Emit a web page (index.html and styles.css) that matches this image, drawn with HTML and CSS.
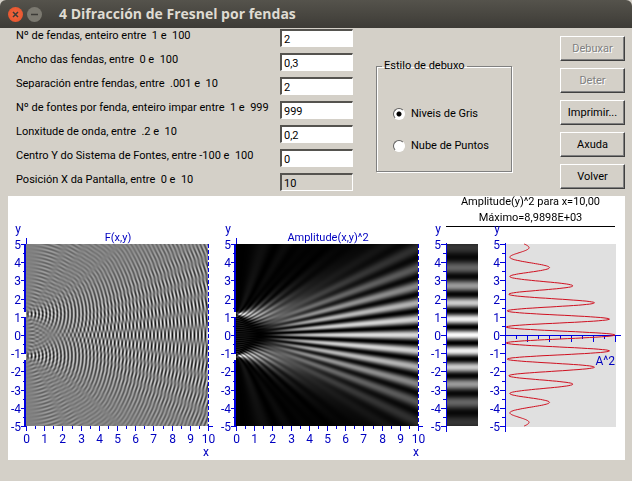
FILE: index.html
```html
<!doctype html>
<html lang="gl">
<head>
<meta charset="utf-8">
<title>4 Difracción de Fresnel por fendas</title>
<link rel="stylesheet" href="styles.css">
</head>

<body>
<header class="titlebar">
    <button type="button" class="win-btn close" aria-label="Pechar">
        <svg width="15" height="15" viewBox="0 0 15 15"><path d="M5 5l5 5M10 5l-5 5" /></svg>
    </button>
    <button type="button" class="win-btn minimize" aria-label="Minimizar">
        <svg width="15" height="15" viewBox="0 0 15 15"><path d="M4 7.5h7" /></svg>
    </button>
    <h1>4 Difracción de Fresnel por fendas</h1>
</header>

<main>
    <form class="controls">
        <div class="params">
            <label for="fendas">Nº de fendas, enteiro entre&nbsp; 1 e&nbsp; 100</label>
            <input type="text" id="fendas" value="2">
            <label for="ancho">Ancho das fendas, entre&nbsp; 0 e&nbsp; 100</label>
            <input type="text" id="ancho" value="0,3">
            <label for="separacion">Separación entre fendas, entre&nbsp; .001 e&nbsp; 10</label>
            <input type="text" id="separacion" value="2">
            <label for="fontes">Nº de fontes por fenda, enteiro impar entre&nbsp; 1 e&nbsp; 999</label>
            <input type="text" id="fontes" value="999">
            <label for="lonxitude">Lonxitude de onda, entre&nbsp; .2 e&nbsp; 10</label>
            <input type="text" id="lonxitude" value="0,2">
            <label for="centro">Centro Y do Sistema de Fontes, entre -100 e&nbsp; 100</label>
            <input type="text" id="centro" value="0">
            <label for="posicion">Posición X da Pantalla, entre&nbsp; 0 e&nbsp; 10</label>
            <input type="text" id="posicion" value="10" readonly>
        </div>
        <fieldset class="style-box">
            <legend>Estilo de debuxo</legend>
            <label><input type="radio" name="estilo" checked>Niveis de Gris</label>
            <label><input type="radio" name="estilo">Nube de Puntos</label>
        </fieldset>
        <div class="actions">
            <button type="button" disabled>Debuxar</button>
            <button type="button" disabled>Deter</button>
            <button type="button">Imprimir...</button>
            <button type="button">Axuda</button>
            <button type="button">Volver</button>
        </div>
    </form>

    <section class="plots">
        <div class="plot">
            <canvas id="field" width="182" height="182"></canvas>
            <svg id="field_axes" width="210" height="232"></svg>
        </div>
        <div class="plot">
            <canvas id="intensity" width="182" height="182"></canvas>
            <svg id="intensity_axes" width="210" height="232"></svg>
        </div>
        <div class="screen">
            <p class="screen-title">Amplitude(y)^2 para x=10,00<br>Máximo=8,9898E+03</p>
            <div class="screen-plots">
                <div class="plot">
                    <canvas id="strip" width="32" height="182"></canvas>
                    <svg id="strip_axes" width="59" height="232"></svg>
                </div>
                <div class="plot">
                    <svg id="profile_axes" width="138" height="232"></svg>
                </div>
            </div>
        </div>
    </section>
</main>
<script src="script.js"></script>
</body>
</html>
```

FILE: styles.css
```css
* {
    box-sizing: border-box;
}
body {
    margin: 0;
    min-height: 100vh;
    background: #d4d0c8;
    color: #000;
    font: 11px/16px Roboto, 'Liberation Sans', sans-serif;
}
.titlebar {
    display: flex;
    align-items: center;
    gap: 4px;
    height: 28px;
    padding: 0 8px;
    background: linear-gradient(#55534c, #3d3b36);
    border-radius: 6px 6px 0 0;
}
.titlebar h1 {
    margin: 0 0 0 13px;
    color: #dfdbd2;
    font: bold 14px/20px 'Open Sans', 'Noto Sans', sans-serif;
}
.win-btn {
    width: 15px;
    height: 15px;
    padding: 0;
    border: 0;
    border-radius: 50%;
    background: #7b7970;
}
.win-btn svg {
    display: block;
    fill: none;
    stroke: #3c3b37;
    stroke-width: 1.5;
}
.close {
    background: radial-gradient(#f4683f, #e2502a);
}
main {
    padding: 0 7px 0 8px;
}
.controls {
    display: flex;
    align-items: flex-start;
    height: 168px;
}
.params {
    display: grid;
    grid-template-columns: 264px 73px;
    grid-auto-rows: 24px;
    align-items: start;
    padding-left: 8px;
}
.params input {
    height: 18px;
    width: 100%;
    margin-top: 1px;
    padding: 2px 2px 0;
    border: 2px solid;
    border-width: 2px 1px 1px 2px;
    border-color: #55534f #fff #fff #55534f;
    background: #fff;
    font: inherit;
    line-height: 14px;
}
.params input:read-only {
    background: #d4d0c8;
}
.style-box {
    width: 136px;
    height: 114px;
    margin: 30px 0 0 23px;
    padding: 24px 14px 0 16px;
    border: 1px solid #808080;
    box-shadow: 1px 1px 0 #fff, inset 1px 1px 0 #fff;
}
.style-box legend {
    margin-left: -11px;
    padding: 0 2px;
}
.style-box label {
    display: flex;
    align-items: center;
    gap: 6px;
    height: 32px;
}
.style-box input {
    appearance: none;
    width: 12px;
    height: 12px;
    margin: 0;
    border: 1px solid;
    border-color: #606060 #fff #fff #606060;
    border-radius: 50%;
    background: #fff;
}
.style-box input:checked {
    background: radial-gradient(#000 2px, #fff 3px);
}
.actions {
    display: grid;
    gap: 7px;
    width: 65px;
    margin: 8px 0 0 auto;
}
.actions button {
    height: 25px;
    padding: 1px 0 0;
    border: 1px solid;
    border-color: #fff #404040 #404040 #fff;
    box-shadow: inset -1px -1px 0 #808080;
    background: #d4d0c8;
    color: #000;
    font: inherit;
}
.actions button:disabled {
    color: #808080;
    text-shadow: 1px 1px 0 #fff;
}
.plots {
    display: flex;
    align-items: flex-end;
    height: 264px;
    background: #fff;
}
.plot {
    display: grid;
}
.plot canvas,
.plot svg {
    display: block;
    grid-area: 1 / 1;
    overflow: visible;
}
.plot canvas {
    margin: 16px 0 0 18px;
}
.plot text {
    fill: #0000c0;
    font: 12px Roboto, 'Liberation Sans', sans-serif;
}
.plot .caption {
    font-size: 11px;
}
.plot .axis {
    fill: none;
    stroke: #0000e0;
    shape-rendering: crispEdges;
}
.plot .wall {
    stroke-width: 2;
}
.plot .edge {
    stroke-dasharray: 4 2;
}
.plot .ground {
    fill: #e0e0e0;
}
.plot .curve {
    fill: none;
    stroke: #d01020;
}
.screen-title {
    margin: 0 10px 1px 18px;
    border-bottom: 1px solid #000;
    text-align: center;
}
.screen-plots {
    display: flex;
}
```

FILE: script.js
```js
var LAMBDA = 0.2, WIDTH = 0.3, SEP = 2, SCREEN = 10;
var SIZE = 182, UNIT = SIZE / 10;
// origin of the drawing area inside each axes svg
var LEFT = 18, TOP = 16;

// point sources, spread over the two slits
var sources = [];
for (var i = 0; i < 25; i++) {
	var off = SEP / 2 + WIDTH * (i + 0.5) / 25;
	sources.push(off, -off);
}

// complex amplitude at x, y
function wave(x, y) {
	var re = 0, im = 0;
	for (var i = 0; i < sources.length; i++) {
		var dy = y - sources[i];
		var r = Math.sqrt(x * x + dy * dy) + 0.001;
		var a = Math.pow(r, -0.18);
		re += a * Math.cos(2 * Math.PI * r / LAMBDA);
		im += a * Math.sin(2 * Math.PI * r / LAMBDA);
	}
	return [re, im];
}
function power(w) {
	return w[0] * w[0] + w[1] * w[1];
}
var max = power(wave(SCREEN, 0));

function paint(id, shade) {
	var canvas = document.getElementById(id);
	var ctx = canvas.getContext("2d");
	var img = ctx.createImageData(canvas.width, canvas.height);
	for (var j = 0, p = 0; j < canvas.height; j++) {
		for (var i = 0; i < canvas.width; i++, p += 4) {
			var v = shade(i / UNIT, 5 - (j + 0.5) / UNIT);
			img.data[p] = img.data[p + 1] = img.data[p + 2] = v;
			img.data[p + 3] = 255;
		}
	}
	ctx.putImageData(img, 0, 0);
}
paint("field", function(x, y) {
	return 128 + 110 * wave(x, y)[0] / Math.sqrt(max);
});
paint("intensity", function(x, y) {
	return 215 * power(wave(x, y)) / max;
});
paint("strip", function(x, y) {
	return 250 * power(wave(SCREEN, y)) / max;
});

function add(svg, name, attrs, text) {
	var el = document.createElementNS("http://www.w3.org/2000/svg", name);
	for (var k in attrs)
		el.setAttribute(k, attrs[k]);
	if (text !== undefined)
		el.textContent = text;
	svg.appendChild(el);
}
function path(svg, d, cls) {
	add(svg, "path", { d : d, "class" : cls || "axis" });
}
function py(y) {
	return Math.round(TOP + (5 - y) * UNIT) + 0.5;
}

function yAxis(svg) {
	var d = "";
	for (var n = -10; n <= 10; n++) {
		var y = py(n / 2);
		d += "M" + LEFT + " " + y + "h" + (n % 2 ? -3 : -5);
		if (n % 2 === 0)
			add(svg, "text", { x : LEFT - 5, y : y + 4, "text-anchor" : "end" }, n / 2);
	}
	path(svg, d);
	add(svg, "text", { x : 10, y : 5, "text-anchor" : "middle" }, "y");
}
function xAxis(svg) {
	var d = "";
	for (var n = 0; n <= 20; n++) {
		var x = Math.round(LEFT + n * UNIT / 2) + 0.5;
		d += "M" + x + " " + (TOP + SIZE) + "v" + (n % 2 ? 3 : 5);
		if (n % 2 === 0)
			add(svg, "text", { x : x, y : 215, "text-anchor" : "middle" }, n / 2);
	}
	path(svg, d + "M" + (LEFT + SIZE) + " " + py(-5) + "h5");
	add(svg, "text", { x : 198, y : 228, "text-anchor" : "middle" }, "x");
}
function mapAxes(id, title) {
	var svg = document.getElementById(id);
	yAxis(svg);
	xAxis(svg);
	// wall with the slits left open
	var x = LEFT - 1, a = SEP / 2, b = a + WIDTH;
	path(svg, "M" + x + " " + TOP + "V" + py(b) + "M" + x + " " + py(a) + "V" + py(-a) +
		"M" + x + " " + py(-b) + "V" + py(-5), "axis wall");
	path(svg, "M" + (LEFT + 0.5) + " " + (TOP - 6) + "v6");
	path(svg, "M" + (LEFT + SIZE + 0.5) + " " + TOP + "v" + SIZE, "axis edge");
	add(svg, "text", { x : 110, y : 13, "text-anchor" : "middle", "class" : "caption" }, title);
}
mapAxes("field_axes", "F(x,y)");
mapAxes("intensity_axes", "Amplitude(x,y)^2");

var side = "M" + (LEFT + 0.5) + " " + (TOP - 1) + "V204";
var strip = document.getElementById("strip_axes");
yAxis(strip);
path(strip, side);

var profile = document.getElementById("profile_axes");
add(profile, "rect", { x : LEFT, y : TOP, width : 111, height : SIZE + 1, "class" : "ground" });
yAxis(profile);
path(profile, side);
var ticks = "M13 " + py(0) + "H134";
for (var n = 1; n <= 10; n++)
	ticks += "M" + (LEFT + n * 11 + 0.5) + " " + py(0) + "v" + (n % 2 ? 3 : 6);
path(profile, ticks);
add(profile, "text", { x : 128, y : 137, "text-anchor" : "end" }, "A^2");
var points = [];
for (var y = 5; y >= -5; y -= 0.02)
	points.push((LEFT + 1 + 109 * power(wave(SCREEN, y)) / max).toFixed(1) + " " + (TOP + (5 - y) * UNIT).toFixed(1));
path(profile, "M" + points.join("L"), "curve");
```
